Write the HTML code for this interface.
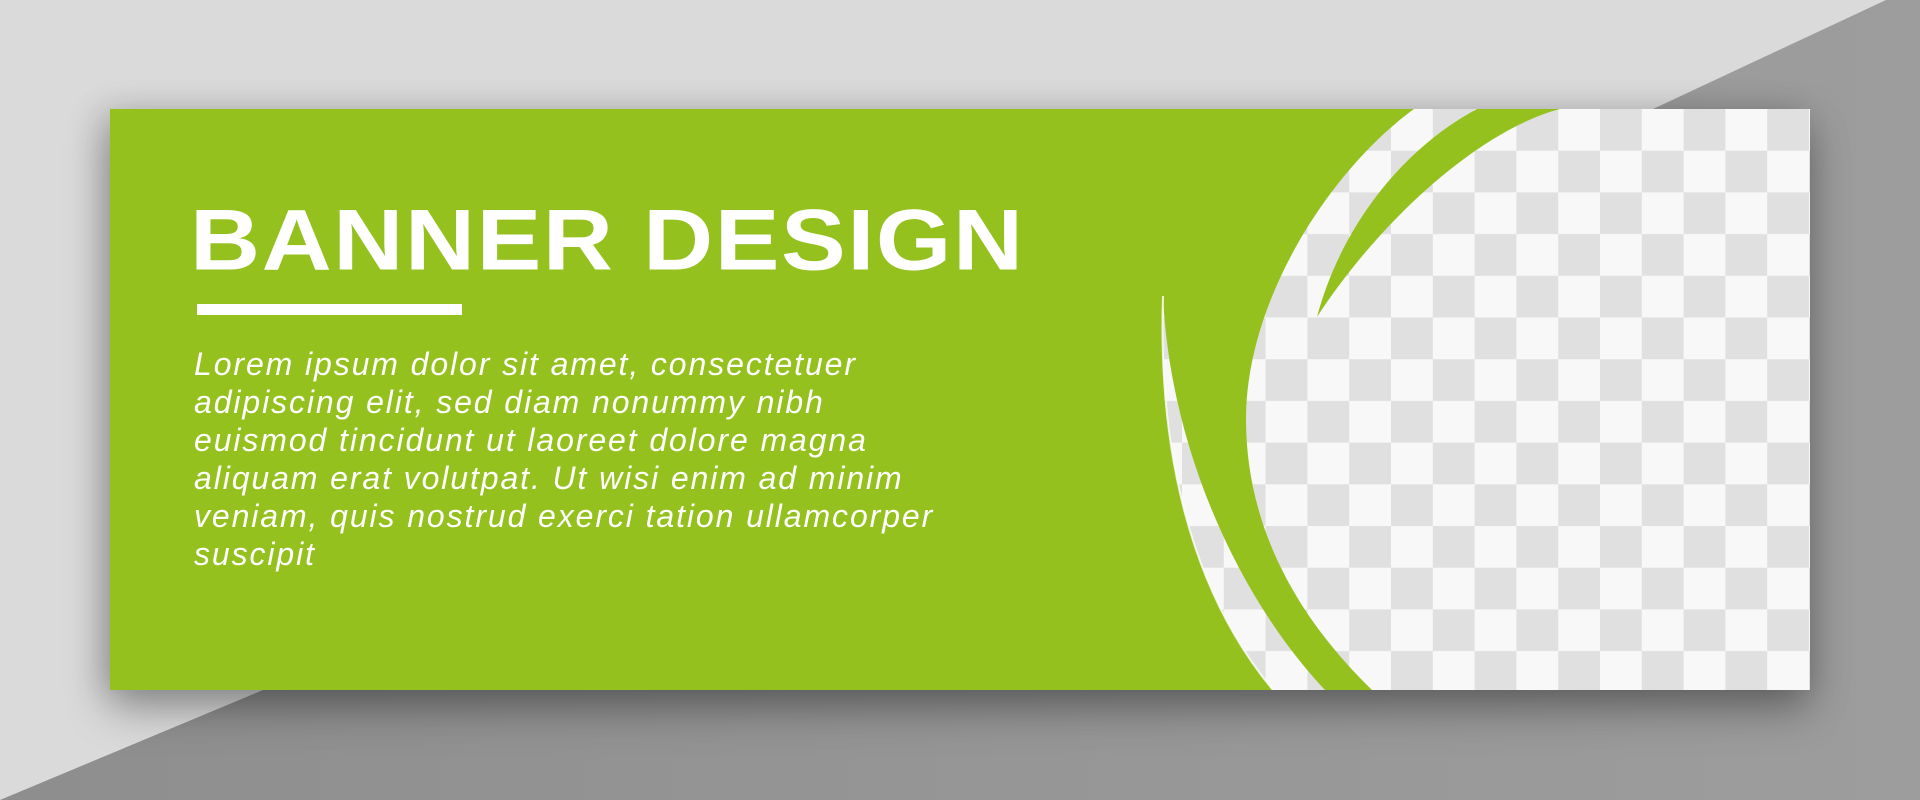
<!DOCTYPE html>
<html><head><meta charset="utf-8">
<style>
html,body{margin:0;padding:0}
body{width:1920px;height:800px;position:relative;overflow:hidden;background:#dadada;font-family:"Liberation Sans",sans-serif}
#bg{position:absolute;left:0;top:0}
#banner{position:absolute;left:110px;top:109px;width:1700px;height:581px;box-shadow:0 18px 40px rgba(0,0,0,.35),-10px 0 30px rgba(0,0,0,.12)}
h1{position:absolute;left:190px;top:190px;margin:0;font-size:97px;font-weight:bold;color:#fff;letter-spacing:1.6px;line-height:110px;white-space:nowrap;transform:scaleY(0.89);transform-origin:0 13px}
.bar{position:absolute;left:197px;top:304px;width:265px;height:11px;background:#fff}
p{position:absolute;left:194px;top:345px;margin:0;font-size:32px;font-style:italic;color:#fff;line-height:38px;letter-spacing:1.9px;white-space:nowrap}
</style></head><body>
<svg id="bg" width="1920" height="800">
<defs><linearGradient id="g1" x1="0" y1="0" x2="1" y2="0"><stop offset="0" stop-color="#8e8e8e"/><stop offset="1" stop-color="#9d9d9d"/></linearGradient></defs>
<polygon points="1886,0 1920,0 1920,800 0,800 263,690 1653,109" fill="url(#g1)"/>
</svg>
<div id="banner">
<svg width="1700" height="581" style="display:block">
<defs>
<pattern id="ck" x="1809" y="109" width="83.6" height="83.4" patternUnits="userSpaceOnUse">
<rect width="83.6" height="83.4" fill="#f8f8f8"/>
<rect x="41.8" y="0" width="41.8" height="41.7" fill="#e0e0e0"/>
<rect x="0" y="41.7" width="41.8" height="41.7" fill="#e0e0e0"/>
</pattern>
</defs>
<g transform="translate(-110,-109)">
<rect x="110" y="109" width="1700" height="581" fill="url(#ck)"/>
<path d="M110,109 H1414 C1330,170 1246,300 1246,419 C1246,530 1300,620 1372,690 H1325 C1240,600 1170,450 1163,296 C1158,450 1190,590 1273,690 H110 Z" fill="#95c11f"/>
<path d="M1163,296 C1158,450 1190,590 1273,690" fill="none" stroke="#fff" stroke-width="2" opacity=".8"/>
<path d="M1477,109 H1560 C1480,130 1380,220 1317,317 C1340,230 1400,150 1477,109 Z" fill="#95c11f"/>
</g>
</svg>
</div>
<h1>BANNER DESIGN</h1>
<div class="bar"></div>
<p>Lorem ipsum dolor sit amet, consectetuer<br>adipiscing elit, sed diam nonummy nibh<br>euismod tincidunt ut laoreet dolore magna<br>aliquam erat volutpat. Ut wisi enim ad minim<br>veniam, quis nostrud exerci tation ullamcorper<br>suscipit</p>
</body></html>
